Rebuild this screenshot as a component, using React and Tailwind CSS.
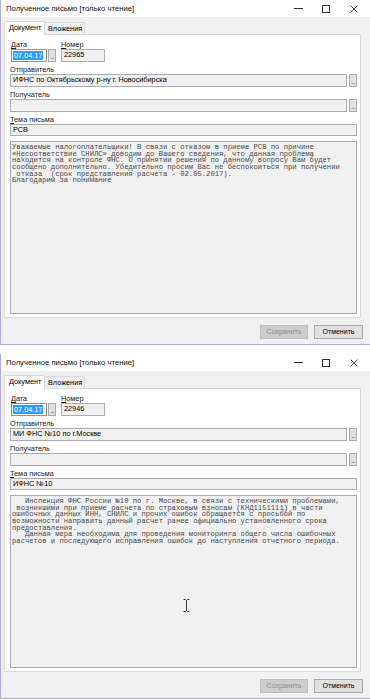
import React from "react";

const letters = [
  {
    date: "07.04.17",
    number: "22965",
    sender: "ИФНС по Октябрьскому р-ну г. Новосибирска",
    subject: "РСВ",
    body: `Уважаемые налогоплательщики! В связи с отказом в приеме РСВ по причине
«Несоответствие СНИЛС» доводим до Вашего сведения, что данная проблема
находится на контроле ФНС. О принятии решения по данному вопросу Вам будет
сообщено дополнительно. Убедительно просим Вас не беспокоиться при получении
 отказа  (срок представления расчета - 02.05.2017).
Благодарим за понимание`,
  },
  {
    date: "07.04.17",
    number: "22946",
    sender: "МИ ФНС №10 по г.Москве",
    subject: "ИФНС №10",
    body: `   Инспекция ФНС России №10 по г. Москве, в связи с техническими проблемами,
 возникшими при приеме расчета по страховым взносам (КНД1151111) в части
ошибочных данных ИНН, СНИЛС и прочих ошибок обращается с просьбой по
возможности направить данный расчет ранее официально установленного срока
предоставления.
   Данная мера необходима для проведения мониторинга общего числа ошибочных
расчетов и последующего исправления ошибок до наступления отчетного периода.`,
  },
];

const Label = ({ hot, rest }) => (
  <div className="h-[9px] text-[7.3px] leading-[9px] text-[#1a1a1a]">
    {hot && <span className="underline">{hot}</span>}
    {rest}
  </div>
);

const DotsButton = ({ h = "h-[13px]" }) => (
  <div className={`w-[8px] ${h} shrink-0 bg-[#e1e1e1] border border-[#adadad] flex items-end justify-center pb-[1px] text-[6px] leading-[5px] tracking-[-0.5px]`}>
    ...
  </div>
);

const Window = ({ data }) => (
  <div className="h-[345px] shrink-0 flex flex-col border-l border-b border-[#b3a9dd]">
    {/* Title bar */}
    <div className="h-[17px] shrink-0 bg-white flex items-center">
      <span className="pl-[5px] text-[7.7px] leading-none text-[#111]">
        Полученное письмо [только чтение]
      </span>
      <div className="ml-auto flex items-center pr-[2px] h-full">
        <div className="w-[28px] h-full flex items-center justify-center">
          <div className="w-[9px] h-px bg-[#333]" />
        </div>
        <div className="w-[28px] h-full flex items-center justify-center">
          <div className="w-[8px] h-[8px] border border-[#333]" />
        </div>
        <div className="w-[28px] h-full flex items-center justify-center">
          <svg width="8" height="8" viewBox="0 0 8 8">
            <path d="M0.5 0.5 L7.5 7.5 M7.5 0.5 L0.5 7.5" stroke="#333" strokeWidth="0.9" fill="none" />
          </svg>
        </div>
      </div>
    </div>

    {/* Body */}
    <div className="flex-1 bg-[#f0f0f0] flex flex-col">
      {/* Tabs */}
      <div className="h-[17px] pt-[3px] pl-[3px] flex items-end">
        <div className="h-[14px] w-[41px] bg-white border border-b-0 border-[#d9d9d9] text-[7.3px] leading-[12px] pl-[4px] relative z-10 -mb-px">
          Документ
        </div>
        <div className="h-[12px] w-[40px] border border-l-0 border-b-0 border-[#d9d9d9] text-[7.3px] leading-[11px] pl-[3px]">
          Вложения
        </div>
      </div>

      {/* Panel */}
      <div className="ml-[3px] w-[357px] h-[284px] bg-white border border-[#d9d9d9] pt-[5px] pl-[5px] pr-[3px] pb-[3px] flex flex-col gap-[3px]">
        <div className="flex gap-[5px] pl-[1px]">
          <div className="flex flex-col">
            <Label hot="Д" rest="ата" />
            <div className="flex gap-[1px]">
              <div className="w-[36px] h-[13px] bg-white border border-[#8f8f8f] flex items-center pl-[1px]">
                <span className="bg-[#3399ff] text-white text-[7.3px] leading-[9px] px-px">{data.date}</span>
              </div>
              <DotsButton />
            </div>
          </div>
          <div className="flex flex-col">
            <Label hot="Н" rest="омер" />
            <div className="w-[44px] h-[13px] bg-[#f0f0f0] border border-[#acacac] flex items-center pl-[2px] text-[7.3px]">
              {data.number}
            </div>
          </div>
        </div>

        <div className="flex flex-col">
          <Label rest="Отправитель" />
          <div className="flex gap-[2px]">
            <div className="flex-1 h-[13px] bg-[#f0f0f0] border border-[#acacac] flex items-center pl-[2px] text-[7.3px]">
              {data.sender}
            </div>
            <DotsButton />
          </div>
        </div>

        <div className="flex flex-col">
          <Label rest="Получатель" />
          <div className="flex gap-[2px]">
            <div className="flex-1 h-[13px] bg-[#f0f0f0] border border-[#acacac]" />
            <DotsButton />
          </div>
        </div>

        <div className="flex flex-col">
          <Label hot="Т" rest="ема письма" />
          <div className="h-[12px] bg-[#f0f0f0] border border-[#acacac] flex items-center pl-[2px] text-[7.3px]">
            {data.subject}
          </div>
        </div>

        <div className="mt-[2px] flex-1 bg-[#f0f0f0] border border-[#acacac] pl-px pt-[2px] whitespace-pre font-['Liberation_Mono','Courier_New',monospace] text-[7.2px] leading-[6.67px] text-[#4a4a4a]">
          {data.body}
        </div>
      </div>

      {/* Buttons */}
      <div className="mt-[7px] flex justify-end gap-[6px] pr-[7px]">
        <div className="w-[48px] h-[14px] bg-[#cccccc] border border-[#bfbfbf] flex items-center justify-center text-[7px] text-[#8d8d8d]">
          Сохранить
        </div>
        <div className="w-[49px] h-[14px] bg-[#e1e1e1] border border-[#adadad] flex items-center justify-center text-[7px]">
          Отменить
        </div>
      </div>
    </div>
  </div>
);

export default function App() {
  return (
    <div className="relative w-[370px] h-[700px] bg-white flex flex-col overflow-hidden font-['Liberation_Sans',Arial,sans-serif] text-black">
      <Window data={letters[0]} />
      <div className="h-[9px] shrink-0" />
      <Window data={letters[1]} />

      {/* mouse I-beam cursor */}
      <svg className="absolute left-[183px] top-[599px]" width="7" height="13" viewBox="0 0 7 13">
        <path d="M0.5 0.5 H2.5 L3.5 1.5 L4.5 0.5 H6.5 M3.5 1.5 V11.5 M0.5 12.5 H2.5 L3.5 11.5 L4.5 12.5 H6.5" stroke="#222" strokeWidth="0.9" fill="none" />
      </svg>
    </div>
  );
}
